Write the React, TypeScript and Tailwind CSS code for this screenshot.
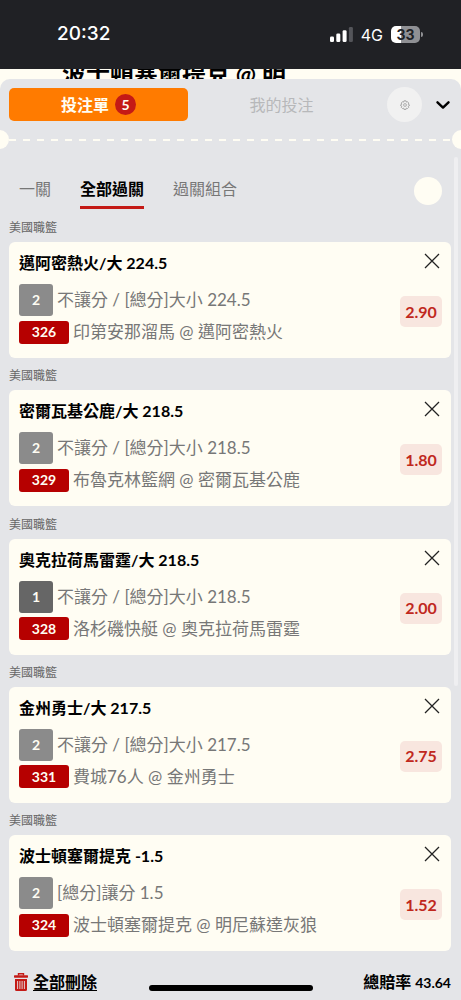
import React from "react";

type Bet = {
  title: string;
  min: number;
  market: string;
  code: string;
  match: string;
  odds: string;
};

const bets: Bet[] = [
  { title: "邁阿密熱火/大 224.5", min: 2, market: "不讓分 / [總分]大小 224.5", code: "326", match: "印第安那溜馬 @ 邁阿密熱火", odds: "2.90" },
  { title: "密爾瓦基公鹿/大 218.5", min: 2, market: "不讓分 / [總分]大小 218.5", code: "329", match: "布魯克林籃網 @ 密爾瓦基公鹿", odds: "1.80" },
  { title: "奧克拉荷馬雷霆/大 218.5", min: 1, market: "不讓分 / [總分]大小 218.5", code: "328", match: "洛杉磯快艇 @ 奧克拉荷馬雷霆", odds: "2.00" },
  { title: "金州勇士/大 217.5", min: 2, market: "不讓分 / [總分]大小 217.5", code: "331", match: "費城76人 @ 金州勇士", odds: "2.75" },
  { title: "波士頓塞爾提克 -1.5", min: 2, market: "[總分]讓分 1.5", code: "324", match: "波士頓塞爾提克 @ 明尼蘇達灰狼", odds: "1.52" },
];

function StatusBar() {
  return (
    <div className="flex h-[69px] items-center justify-between bg-[#202125] pr-[38px] pl-[57px] font-['Inter','Liberation_Sans',sans-serif] text-white">
      <span className="text-[19px] font-medium">20:32</span>
      <div className="flex items-center gap-2">
        <svg width="23" height="15" viewBox="0 0 23 15" fill="#fff" aria-hidden="true">
          <rect x="0" y="9.5" width="4" height="5.5" rx="1.3" />
          <rect x="6.3" y="6.5" width="4" height="8.5" rx="1.3" />
          <rect x="12.600" y="3.300" width="4" height="11.700" rx="1.3" />
          <rect x="18.900" y="0" width="4" height="15" rx="1.3" fill="#54555a" />
        </svg>
        <span className="text-base">4G</span>
        <span className="flex items-center gap-px">
          <span className="flex h-[17px] w-[29px] items-center justify-center rounded-[5px] bg-linear-to-r from-white from-33% to-[#8f9094] to-33% text-sm font-bold text-[#202125]">
            33
          </span>
          <span className="h-[5px] w-[2px] rounded-r-sm bg-[#8f9094]" />
        </span>
      </div>
    </div>
  );
}

function Divider() {
  return (
    <div className="flex h-[19px] items-center overflow-hidden" aria-hidden="true">
      <div className="-ml-[10px] size-[19px] shrink-0 rounded-full bg-[#fffdf3]" />
      <div className="h-[2px] flex-1 bg-[repeating-linear-gradient(90deg,#fffdf3_0_7px,transparent_7px_14px)]" />
      <div className="-mr-[10px] size-[19px] shrink-0 rounded-full bg-[#fffdf3]" />
    </div>
  );
}

function BetCard({ bet }: { bet: Bet }) {
  return (
    <li>
      <p className="flex h-8 items-center pt-1 text-xs text-[#666]">美國職籃</p>
      <article className="flex h-[116px] justify-between rounded-md bg-[#fffdf3] pr-[9px] pl-[10px]">
        <div className="flex flex-col pt-[9px]">
          <h2 className="text-base leading-6 font-bold text-black">{bet.title}</h2>
          <div className="mt-[9px] flex items-center gap-1">
            <span className={`flex h-8 w-[34px] items-center justify-center rounded-[3px] text-sm font-bold text-[#fffdf3] ${bet.min === 1 ? "bg-[#666]" : "bg-[#8b8b8b]"}`}>
              {bet.min}
            </span>
            <span className="text-[17px] leading-6 text-[#777]">{bet.market}</span>
          </div>
          <div className="mt-1 flex items-center gap-1">
            <span className="flex h-[23px] w-[50px] items-center justify-center rounded-[3px] bg-[#b60000] text-sm font-bold text-[#fffdf3]">
              {bet.code}
            </span>
            <span className="text-[17px] leading-6 text-[#777]">{bet.match}</span>
          </div>
        </div>
        <div className="flex flex-col items-end gap-[25px] pt-[9px]">
          <button type="button" aria-label="刪除" className="flex size-5 items-center justify-center">
            <svg width="16" height="16" viewBox="0 0 16 16" fill="none" stroke="#222" strokeWidth="1.3" aria-hidden="true">
              <path d="M1 1l14 14M15 1L1 15" />
            </svg>
          </button>
          <button type="button" className="flex h-[31px] w-[42px] items-center justify-center rounded-[5px] bg-[#f8e6df] text-base font-bold text-[#c0281d]">
            {bet.odds}
          </button>
        </div>
      </article>
    </li>
  );
}

export default function App() {
  return (
    <div className="flex min-h-screen flex-col bg-[#fffdf3] font-['Lato','Noto_Sans_CJK_TC',sans-serif]">
      <StatusBar />
      <div className="flex h-[10px] items-center overflow-hidden pl-[62px] text-2xl font-bold whitespace-nowrap text-black">
        <span>波士頓塞爾提克 @ 明</span>
      </div>
      <main className="relative flex flex-1 flex-col rounded-t-[10px] bg-[#e4e5e8]">
        <header className="flex items-center pt-2 pr-[11px] pl-[9px]">
          <button type="button" className="mr-1 flex h-[33px] flex-1 items-center justify-center gap-[6px] rounded-[5px] bg-[#ff7b00] text-base font-bold text-[#fffdf3]">
            投注單
            <span className="flex size-[21px] items-center justify-center rounded-full bg-[#c41a16] text-sm">5</span>
          </button>
          <button type="button" className="flex-1 text-base text-[#b7b8ba]">我的投注</button>
          <button type="button" aria-label="設定" className="mr-[14px] ml-4 flex size-[35px] items-center justify-center rounded-full bg-[#f1f1f1]">
            <svg width="10" height="10" viewBox="0 0 24 24" fill="none" stroke="#999" strokeWidth="2" aria-hidden="true">
              <path d="M9.5 2h5l.8 3 2.7-1 3 3.5-1.500 2.500 3 1.500v2l-3 1.500L21 17.500l-3 3-2.700-1-.8 3h-5l-.8-3-2.700 1-3-3 1.500-2.500-3-1.500v-2l3-1.500L3 7.500 6 4l2.700 1z" />
              <rect x="9" y="9" width="6" height="6" rx="1.500" />
            </svg>
          </button>
          <button type="button" aria-label="收合" className="flex h-8 w-[14px] items-center justify-center">
            <svg width="14" height="8" viewBox="0 0 14 8" fill="none" stroke="#000" strokeWidth="2.4" strokeLinecap="round" strokeLinejoin="round" aria-hidden="true">
              <path d="M1.500 1.300L7 6.600l5.500-5.300" />
            </svg>
          </button>
        </header>
        <div className="pt-2">
          <Divider />
        </div>
        <div className="absolute top-[78px] right-[3px] h-[529px] w-[4px] rounded-full bg-[#efeff1]" />
        <div className="flex items-start justify-between pt-7 pr-[19px] pl-[19px]">
          <nav className="flex gap-[29px] text-base leading-6 text-[#777]">
            <button type="button" className="h-8 pb-2">一關</button>
            <button type="button" className="h-8 border-b-[3px] border-[#c41a16] pb-[5px] font-bold text-black">全部過關</button>
            <button type="button" className="h-8 pb-2">過關組合</button>
          </nav>
          <button type="button" aria-label="選項" className="size-7 rounded-full bg-[#fffdf3]" />
        </div>
        <ul className="flex flex-1 flex-col justify-between pt-px pr-[10px] pl-[9px]">
          {bets.map((bet) => (
            <BetCard key={bet.code} bet={bet} />
          ))}
        </ul>
        <footer className="relative flex h-[49px] items-center justify-between pt-3 pr-[10px] pl-[14px] text-base font-bold text-black">
          <button type="button" className="flex items-center gap-[5px]">
            <svg width="14" height="18" viewBox="0 0 14 18" aria-hidden="true">
              <path d="M4.500 2.500V.8h5v1.700" fill="none" stroke="#c41a16" strokeWidth="1.400" />
              <rect x="0" y="2.300" width="14" height="2.400" rx=".6" fill="#c41a16" />
              <path d="M1 6h12v10.500a1.500 1.500 0 0 1-1.500 1.500h-9A1.500 1.500 0 0 1 1 16.500z" fill="#c41a16" />
              <path d="M3.600 8v8M5.900 8v8M8.100 8v8M10.400 8v8" stroke="#e4e5e8" strokeWidth=".9" />
            </svg>
            <span className="underline underline-offset-2">全部刪除</span>
          </button>
          <span>
            總賠率 <span className="text-sm">43.64</span>
          </span>
          <span className="absolute bottom-[9px] left-1/2 h-[6px] w-[164px] -translate-x-1/2 rounded-full bg-black" />
        </footer>
      </main>
    </div>
  );
}
